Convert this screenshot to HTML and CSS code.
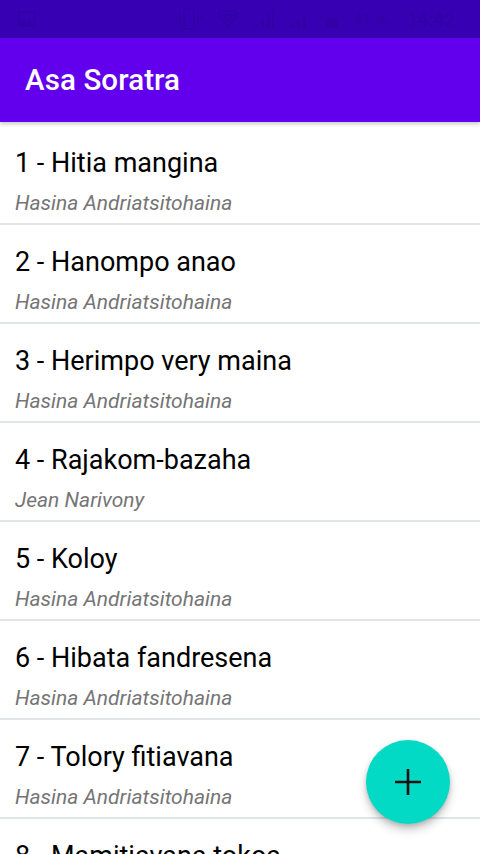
FILE: index.html
```html
<!DOCTYPE html>
<html>
<head>
<meta charset="utf-8">
<link rel="stylesheet" href="styles.css">
</head>
<body>
<div class="screen">
  <div class="statusbar">
    <div class="sb-left">
      <svg width="18" height="16" viewBox="0 0 18 16"><rect x="1" y="1" width="16" height="14" fill="none" stroke="currentColor" stroke-width="1.5"/><path d="M2 14 L6 9 L9 12 L12 8 L16 14 Z" fill="currentColor"/></svg>
    </div>
    <div class="sb-right">
      <svg width="28" height="22" viewBox="0 0 28 22"><rect x="9" y="1" width="10" height="20" rx="1.5" fill="none" stroke="currentColor" stroke-width="1.6"/><path d="M5 6v10M2 8v6M23 6v10M26 8v6" stroke="currentColor" stroke-width="1.6"/></svg>
      <svg width="22" height="18" viewBox="0 0 22 18"><path d="M1 4 L11 17 L21 4 L17 1 L5 1 Z M6 5 L16 5 L11 11 Z" fill="none" stroke="currentColor" stroke-width="1.6"/></svg>
      <svg width="22" height="22" viewBox="0 0 22 22"><path d="M2 20h3v-4H2zM8 20h3V11H8zM14 20h3V6h-3zM19 20h2V1h-2z" fill="currentColor"/></svg>
      <svg width="22" height="22" viewBox="0 0 22 22"><path d="M2 20h3v-3H2zM8 20h3v-7H8zM14 20h3V8h-3z" fill="currentColor"/></svg>
      <svg width="14" height="22" viewBox="0 0 14 22"><rect x="1" y="10" width="12" height="10" fill="currentColor"/></svg>
      <span class="sb-text">41 %</span>
      <span class="sb-text time">14:42</span>
    </div>
  </div>
  <header class="appbar">
    <h1 class="title">Asa Soratra</h1>
  </header>
  <ul class="list">
    <li class="item"><div class="item-title">1 - Hitia mangina</div><div class="item-sub">Hasina Andriatsitohaina</div></li>
    <li class="item"><div class="item-title">2 - Hanompo anao</div><div class="item-sub">Hasina Andriatsitohaina</div></li>
    <li class="item"><div class="item-title">3 - Herimpo very maina</div><div class="item-sub">Hasina Andriatsitohaina</div></li>
    <li class="item"><div class="item-title">4 - Rajakom-bazaha</div><div class="item-sub">Jean Narivony</div></li>
    <li class="item"><div class="item-title">5 - Koloy</div><div class="item-sub">Hasina Andriatsitohaina</div></li>
    <li class="item"><div class="item-title">6 - Hibata fandresena</div><div class="item-sub">Hasina Andriatsitohaina</div></li>
    <li class="item"><div class="item-title">7 - Tolory fitiavana</div><div class="item-sub">Hasina Andriatsitohaina</div></li>
    <li class="item"><div class="item-title">8 - Mamitiavana tokoa</div><div class="item-sub">Hasina Andriatsitohaina</div></li>
  </ul>
  <button class="fab" aria-label="Add">
    <svg width="28" height="28" viewBox="0 0 28 28"><path d="M14 1v26M1 14h26" stroke="#111" stroke-width="2.6"/></svg>
  </button>
</div>
</body>
</html>
```

FILE: styles.css
```css
* { box-sizing: border-box; }
html, body { margin: 0; padding: 0; }
body {
  width: 480px;
  height: 854px;
  overflow: hidden;
  background: #ffffff;
  font-family: Roboto, "Noto Sans", sans-serif;
}
.screen {
  position: relative;
  width: 480px;
  height: 854px;
  overflow: hidden;
}
.statusbar {
  height: 38px;
  background: #3700b3;
  color: #3200a6;
  display: flex;
  align-items: center;
  justify-content: space-between;
  padding: 0 25px 0 18px;
}
.sb-left { display: flex; align-items: center; }
.sb-right {
  display: flex;
  align-items: center;
  gap: 14px;
}
.sb-text {
  font-size: 17px;
  font-weight: 500;
  color: #3200a6;
}
.time { font-size: 19px; margin-left: 4px; }
.appbar {
  height: 84px;
  background: #6200ee;
  display: flex;
  align-items: center;
  padding: 0 25px;
  position: relative;
  z-index: 2;
  box-shadow: 0 2px 4px rgba(0,0,0,0.22);
}
.title {
  margin: 0;
  color: #ffffff;
  font-size: 29.5px;
  font-weight: 500;
  letter-spacing: 0.1px;
}
.list {
  list-style: none;
  margin: 0;
  padding: 4px 0 0 0;
}
.item {
  height: 99px;
  border-bottom: 2px solid #e2e5e8;
  padding: 21px 16px 0 15px;
}
.item-title {
  font-size: 27px;
  color: #000000;
  line-height: 32px;
  white-space: nowrap;
}
.item-sub {
  margin-top: 12px;
  font-size: 21px;
  font-style: italic;
  color: #757575;
  line-height: 24px;
  white-space: nowrap;
}
.fab {
  position: absolute;
  left: 366px;
  top: 740px;
  width: 84px;
  height: 84px;
  border-radius: 50%;
  border: none;
  background: #03dac6;
  display: flex;
  align-items: center;
  justify-content: center;
  box-shadow: 0 6px 10px rgba(0,0,0,0.2), 0 2px 4px rgba(0,0,0,0.15);
  padding: 0;
}
```
